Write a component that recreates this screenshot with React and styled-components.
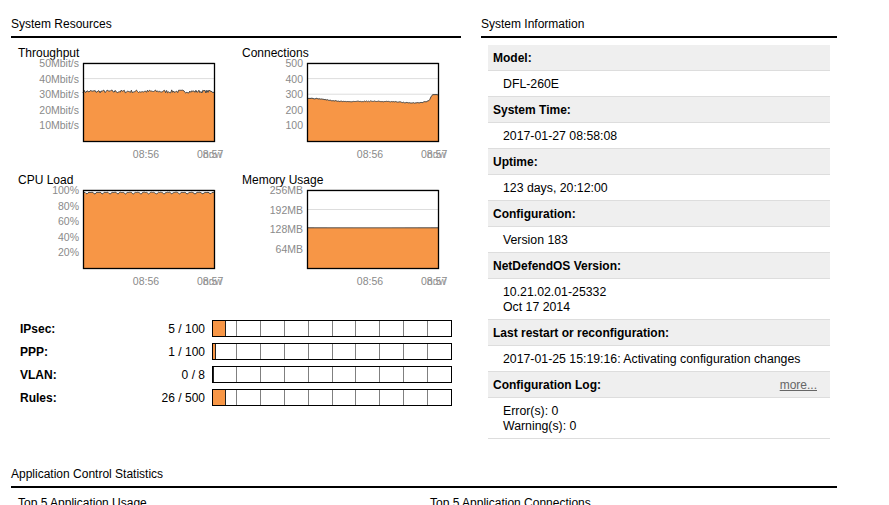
import React from "react";
import styled, { createGlobalStyle } from "styled-components";

const GlobalStyle = createGlobalStyle`
  body {
    margin: 0;
    background: #fff;
    color: #000;
    font-family: "Liberation Sans", Arial, sans-serif;
    font-size: 12px;
  }
`;

const ORANGE = "#f79646";

const Page = styled.div`
  padding-left: 11px;
  width: 826px;
`;
const TopRow = styled.div`
  display: grid;
  grid-template-columns: 450px 356px;
  column-gap: 20px;
  align-items: start;
`;
const Heading = styled.h2`
  margin: 0;
  padding: 17px 0 4px;
  font-size: 12px;
  font-weight: normal;
  line-height: 15px;
  border-bottom: 2px solid #000;
`;
const ChartGrid = styled.div`
  display: grid;
  grid-template-columns: 224px 219px;
  row-gap: 12px;
  padding: 7px 0 0 7px;
`;
const ChartCell = styled.div`
  display: flex;
  flex-direction: column;
`;
const ChartTitle = styled.div`
  padding-top: 1px;
  line-height: 14px;
`;
const UsageList = styled.div`
  display: flex;
  flex-direction: column;
  gap: 6px;
  margin-top: 33px;
  padding-left: 9px;
`;
const UsageRow = styled.div`
  display: flex;
  align-items: center;
  height: 17px;
`;
const UsageLabel = styled.div`
  width: 100px;
  font-weight: bold;
`;
const UsageValue = styled.div`
  width: 85px;
  text-align: right;
  margin-right: 7px;
`;
const Meter = styled.div`
  position: relative;
  display: flex;
  width: 240px;
  height: 17px;
  box-sizing: border-box;
  border: 1px solid #000;
`;
const MeterCell = styled.div`
  flex: 1;
  & + & {
    border-left: 1px solid #808080;
  }
`;
const MeterFill = styled.div`
  position: absolute;
  left: 0;
  top: 0;
  bottom: 0;
  background: ${ORANGE};
  border-right: 1px solid #222;
`;
const InfoTable = styled.div`
  padding: 7px 7px 0;
`;
const InfoHeader = styled.div`
  display: flex;
  justify-content: space-between;
  padding: 6px 5px 4px;
  line-height: 15px;
  font-weight: bold;
  background: #efefef;
  border-bottom: 1px solid #ddd;
`;
const InfoValue = styled.div`
  padding: 6px 15px 4px;
  line-height: 15px;
  font-size: 12.3px;
  border-bottom: 1px solid #ddd;
`;
const MoreLink = styled.a`
  margin-right: 8px;
  font-weight: normal;
  color: #666;
  text-decoration: underline;
  cursor: pointer;
`;
const AppSection = styled.section`
  margin-top: 11px;
`;
const AppColumns = styled.div`
  display: grid;
  grid-template-columns: 412px 1fr;
  padding: 8px 0 0 7px;
  line-height: 15px;
`;

function rng(seed) {
  let s = seed;
  return () => {
    s = (s * 16807) % 2147483647;
    return (s - 1) / 2147483646;
  };
}

function interp(keys, t) {
  for (let i = 1; i < keys.length; i++) {
    if (t <= keys[i][0]) {
      const [t0, v0] = keys[i - 1];
      const [t1, v1] = keys[i];
      return v0 + ((v1 - v0) * (t - t0)) / (t1 - t0);
    }
  }
  return keys[keys.length - 1][1];
}

const N = 131;
const r1 = rng(7);
const throughputData = Array.from({ length: N }, () => 0.635 + (r1() - 0.5) * 0.04);
const r2 = rng(31);
const connKeys = [
  [0, 0.55], [0.1, 0.54], [0.2, 0.515], [0.3, 0.505], [0.5, 0.51],
  [0.7, 0.5], [0.8, 0.485], [0.88, 0.495], [0.93, 0.515], [0.96, 0.6], [1, 0.59],
];
const connData = Array.from({ length: N }, (_, i) => interp(connKeys, i / (N - 1)) + (r2() - 0.5) * 0.01);
const r3 = rng(99);
const cpuData = Array.from({ length: N }, (_, i) => 0.97 - 0.022 * Math.pow(Math.abs(Math.sin(i * 0.41)), 8) + (r3() - 0.5) * 0.005);
const memData = Array.from({ length: N }, () => 0.515);

const PX = 65;
const PY = 3;
const PW = 131;
const PH = 78;

const Chart = ({ labels, data }) => {
  const pts = data.map((v, i) => [PX + (i * PW) / (data.length - 1), PY + PH * (1 - v)]);
  const line = pts.map(([x, y], i) => `${i ? "L" : "M"}${x.toFixed(1)},${y.toFixed(1)}`).join(" ");
  const area = `${line} L${PX + PW},${PY + PH} L${PX},${PY + PH} Z`;
  const step = PH / labels.length;
  return (
    <svg width="219" height="100" style={{ display: "block", overflow: "visible" }}>
      {labels.map((l, i) => (
        <g key={l}>
          <line x1={PX} x2={PX + PW} y1={PY + i * step} y2={PY + i * step} stroke="#ddd" />
          <text x="61" y={PY + i * step + 4} textAnchor="end" fontSize="10.5" fill="#8a8a8a">
            {l}
          </text>
        </g>
      ))}
      <path d={area} fill={ORANGE} />
      <path d={line} fill="none" stroke="#444" strokeWidth="1" />
      <rect x={PX + 0.5} y={PY + 0.5} width={PW} height={PH} fill="none" stroke="#000" strokeWidth="1.3" />
      <text x="128" y="98" textAnchor="middle" fontSize="10.5" fill="#8a8a8a">08:56</text>
      <text x="179" y="98" fontSize="10.5" fill="#8a8a8a">08:57</text>
      <text x="185" y="98" fontSize="10.5" fill="#9a9a9a">now</text>
    </svg>
  );
};

const charts = [
  { title: "Throughput", labels: ["50Mbit/s", "40Mbit/s", "30Mbit/s", "20Mbit/s", "10Mbit/s"], data: throughputData },
  { title: "Connections", labels: ["500", "400", "300", "200", "100"], data: connData },
  { title: "CPU Load", labels: ["100%", "80%", "60%", "40%", "20%"], data: cpuData },
  { title: "Memory Usage", labels: ["256MB", "192MB", "128MB", "64MB"], data: memData },
];

const usage = [
  { label: "IPsec:", used: 5, max: 100 },
  { label: "PPP:", used: 1, max: 100 },
  { label: "VLAN:", used: 0, max: 8 },
  { label: "Rules:", used: 26, max: 500 },
];

const info = [
  { title: "Model:", lines: ["DFL-260E"] },
  { title: "System Time:", lines: ["2017-01-27 08:58:08"] },
  { title: "Uptime:", lines: ["123 days, 20:12:00"] },
  { title: "Configuration:", lines: ["Version 183"] },
  { title: "NetDefendOS Version:", lines: ["10.21.02.01-25332", "Oct 17 2014"] },
  { title: "Last restart or reconfiguration:", lines: ["2017-01-25 15:19:16: Activating configuration changes"] },
  { title: "Configuration Log:", lines: ["Error(s): 0", "Warning(s): 0"], more: true },
];

export default function App() {
  return (
    <>
      <GlobalStyle />
      <Page>
        <TopRow>
          <div>
            <Heading>System Resources</Heading>
            <ChartGrid>
              {charts.map(c => (
                <ChartCell key={c.title}>
                  <ChartTitle>{c.title}</ChartTitle>
                  <Chart labels={c.labels} data={c.data} />
                </ChartCell>
              ))}
            </ChartGrid>
            <UsageList>
              {usage.map(u => (
                <UsageRow key={u.label}>
                  <UsageLabel>{u.label}</UsageLabel>
                  <UsageValue>{u.used} / {u.max}</UsageValue>
                  <Meter>
                    {Array.from({ length: 10 }, (_, i) => <MeterCell key={i} />)}
                    <MeterFill style={{ width: `${(u.used / u.max) * 100}%` }} />
                  </Meter>
                </UsageRow>
              ))}
            </UsageList>
          </div>
          <div>
            <Heading>System Information</Heading>
            <InfoTable>
              {info.map(row => (
                <React.Fragment key={row.title}>
                  <InfoHeader>
                    <span>{row.title}</span>
                    {row.more && <MoreLink>more...</MoreLink>}
                  </InfoHeader>
                  <InfoValue>
                    {row.lines.map(l => <div key={l}>{l}</div>)}
                  </InfoValue>
                </React.Fragment>
              ))}
            </InfoTable>
          </div>
        </TopRow>
        <AppSection>
          <Heading>Application Control Statistics</Heading>
          <AppColumns>
            <div>Top 5 Application Usage</div>
            <div>Top 5 Application Connections</div>
          </AppColumns>
        </AppSection>
      </Page>
    </>
  );
}
